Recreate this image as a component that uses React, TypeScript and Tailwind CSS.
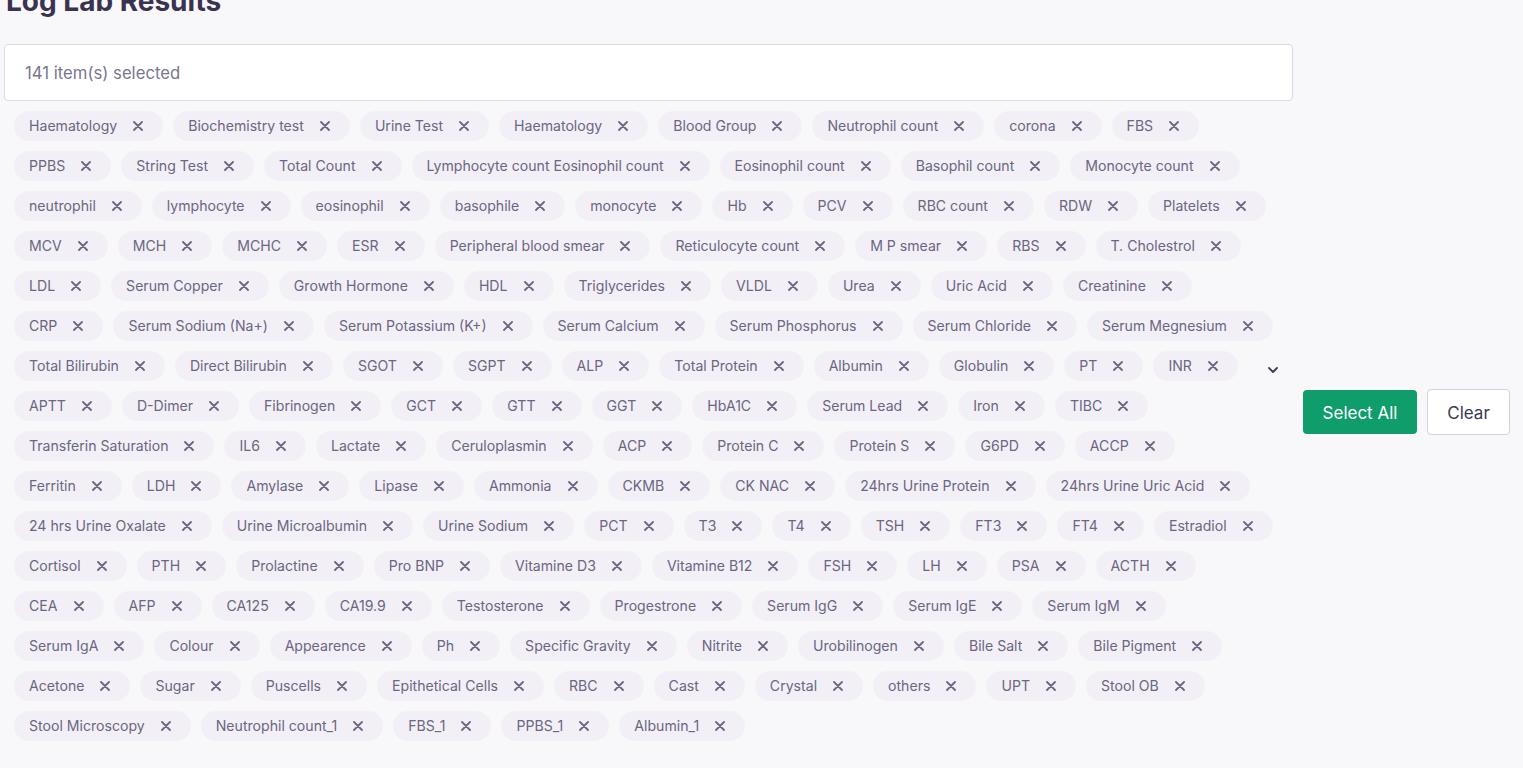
import React from "react";

const rows: string[][] = [
  ["Haematology", "Biochemistry test", "Urine Test", "Haematology", "Blood Group", "Neutrophil count", "corona", "FBS"],
  ["PPBS", "String Test", "Total Count", "Lymphocyte count Eosinophil count", "Eosinophil count", "Basophil count", "Monocyte count"],
  ["neutrophil", "lymphocyte", "eosinophil", "basophile", "monocyte", "Hb", "PCV", "RBC count", "RDW", "Platelets"],
  ["MCV", "MCH", "MCHC", "ESR", "Peripheral blood smear", "Reticulocyte count", "M P smear", "RBS", "T. Cholestrol"],
  ["LDL", "Serum Copper", "Growth Hormone", "HDL", "Triglycerides", "VLDL", "Urea", "Uric Acid", "Creatinine"],
  ["CRP", "Serum Sodium (Na+)", "Serum Potassium (K+)", "Serum Calcium", "Serum Phosphorus", "Serum Chloride", "Serum Megnesium"],
  ["Total Bilirubin", "Direct Bilirubin", "SGOT", "SGPT", "ALP", "Total Protein", "Albumin", "Globulin", "PT", "INR"],
  ["APTT", "D-Dimer", "Fibrinogen", "GCT", "GTT", "GGT", "HbA1C", "Serum Lead", "Iron", "TIBC"],
  ["Transferin Saturation", "IL6", "Lactate", "Ceruloplasmin", "ACP", "Protein C", "Protein S", "G6PD", "ACCP"],
  ["Ferritin", "LDH", "Amylase", "Lipase", "Ammonia", "CKMB", "CK NAC", "24hrs Urine Protein", "24hrs Urine Uric Acid"],
  ["24 hrs Urine Oxalate", "Urine Microalbumin", "Urine Sodium", "PCT", "T3", "T4", "TSH", "FT3", "FT4", "Estradiol"],
  ["Cortisol", "PTH", "Prolactine", "Pro BNP", "Vitamine D3", "Vitamine B12", "FSH", "LH", "PSA", "ACTH"],
  ["CEA", "AFP", "CA125", "CA19.9", "Testosterone", "Progestrone", "Serum IgG", "Serum IgE", "Serum IgM"],
  ["Serum IgA", "Colour", "Appearence", "Ph", "Specific Gravity", "Nitrite", "Urobilinogen", "Bile Salt", "Bile Pigment"],
  ["Acetone", "Sugar", "Puscells", "Epithetical Cells", "RBC", "Cast", "Crystal", "others", "UPT", "Stool OB"],
  ["Stool Microscopy", "Neutrophil count_1", "FBS_1", "PPBS_1", "Albumin_1"],
];

function Chip({ label }: { label: string }) {
  return (
    <div className="flex h-[30px] items-center rounded-full bg-[#f2f0f6] pl-[15px] pr-[20px] text-[14.1px] leading-[18px] text-[#6b6682]">
      <span className="-translate-y-[0.5px] whitespace-nowrap">{label}</span>
      <svg className="ml-[16px]" width="10" height="10" viewBox="0 0 10 10" fill="none">
        <path d="M1 1L9 9M9 1L1 9" stroke="#6b6682" strokeWidth="1.8" strokeLinecap="round" />
      </svg>
    </div>
  );
}

export default function App() {
  return (
    <div
      className="min-h-[768px] w-full overflow-hidden bg-[#f8f8fb] pl-[4px]"
      style={{ fontFamily: "Inter, 'Noto Sans', sans-serif" }}
    >
      <h1 className="mt-[-17px] h-[61px] pl-[2px] text-[28px] font-bold leading-[36px] text-[#3a3350]">
        Log Lab Results
      </h1>
      <div className="flex">
        <div className="relative w-[1289px]">
          <div className="flex h-[57px] items-center rounded-[4px] border border-[#dcd8e6] bg-white pl-[20px] pt-[2px] text-[16.7px] text-[#7a758f]">
            141 item(s) selected
          </div>
          <div className="mt-[10px] flex flex-col gap-[10px] pl-[10px]">
            {rows.map((row, i) => (
              <div key={i} className="flex gap-[10px]">
                {row.map((label, j) => (
                  <Chip key={j} label={label} />
                ))}
              </div>
            ))}
          </div>
          <svg
            className="absolute left-[1263px] top-[322px]"
            width="12"
            height="8"
            viewBox="0 0 12 8"
            fill="none"
          >
            <path d="M2 2L6 6L10 2" stroke="#3d3a4f" strokeWidth="1.8" strokeLinecap="round" strokeLinejoin="round" />
          </svg>
        </div>
        <div className="ml-[10px] mt-[346px] flex items-start gap-[10px]">
          <button className="h-[44px] w-[114px] rounded-[4px] bg-[#0f9d6c] pt-[3px] text-[17px] text-white">Select All</button>
          <button className="h-[46px] w-[83px] -translate-y-[1px] rounded-[4px] border border-[#d4d2dc] bg-white pt-[3px] text-[17px] text-[#3d3a4f]">
            Clear
          </button>
        </div>
      </div>
    </div>
  );
}
